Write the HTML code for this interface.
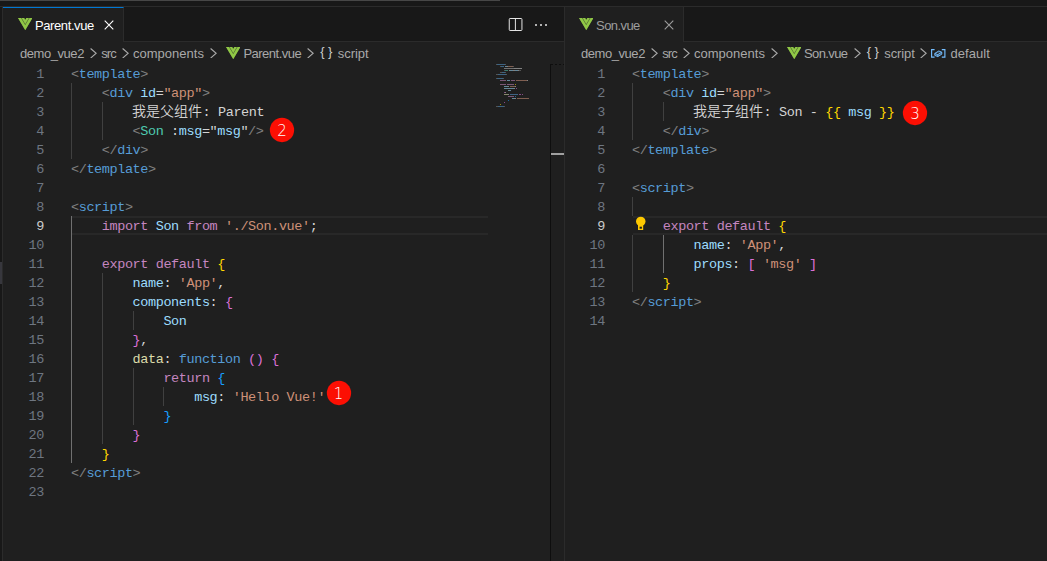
<!DOCTYPE html><html lang="zh"><head><meta charset="utf-8"><title>Parent.vue</title><style>
*{box-sizing:border-box}
html,body{margin:0;padding:0}
body{width:1047px;height:561px;overflow:hidden;background:#1f1f1f;position:relative;font-family:"Liberation Sans","Noto Sans CJK SC",sans-serif;font-size:13px;color:#ccc}
div,span,svg{position:absolute}
.cl{height:19px;line-height:19px;white-space:pre;font-family:"Liberation Mono","Noto Sans CJK SC",monospace;font-size:13.5px;letter-spacing:-0.401px}
.cl span{top:1px;height:19px;line-height:19px}
.cl .cjk{font-family:"Noto Sans CJK SC","Liberation Mono",sans-serif;font-size:14px;letter-spacing:0;color:#d4d4d4;top:-1px;font-weight:350}
.ln{width:41.5px;text-align:right;height:19px;line-height:21px;color:#6e7681;font-family:"Liberation Mono",monospace;font-size:13.5px;letter-spacing:-0.401px}
.ln.act{color:#ccc}
.ig{width:1px;background:#404040}
.iga{background:#707070}
.hl{height:19px;border-top:2px solid #282828;border-bottom:2px solid #282828}
.ui{white-space:pre;height:22px;line-height:22px;font-size:13px;color:#a9a9a9}
</style></head><body>
<div style="left:0;top:0;width:1047px;height:7px;background:#181818"></div>
<div style="left:0;top:0;width:500px;height:1px;background:#474747"></div>
<div style="left:0;top:6px;width:1047px;height:1px;background:#2b2b2b"></div>
<div style="left:0;top:7px;width:2px;height:554px;background:#181818"></div>
<div style="left:0;top:262px;width:2px;height:22px;background:#37373d"></div>
<div style="left:2px;top:7px;width:1px;height:554px;background:#2b2b2b"></div>
<div style="left:3px;top:7px;width:561px;height:35px;background:#181818;border-bottom:1px solid #2b2b2b"></div>
<div style="left:3px;top:7px;width:121px;height:35px;background:#1f1f1f;border-top:1px solid #0078d4;border-right:1px solid #2b2b2b"></div>
<div style="left:565px;top:7px;width:482px;height:35px;background:#181818;border-bottom:1px solid #2b2b2b"></div>
<div style="left:565px;top:7px;width:119px;height:35px;background:#1f1f1f;border-right:1px solid #2b2b2b"></div>
<div style="left:564px;top:7px;width:1px;height:554px;background:#2b2b2b"></div>
<svg class="vue" style="left:17.7px;top:17.8px" viewBox="0 0 14.5 12.2" width="14.5" height="12.2"><polygon points="0,0 6.3,0 7.25,1.6 8.2,0 14.5,0 7.25,12.2" fill="#8dc149" opacity="0.5"/><polygon points="0,0 2.9,0 7.25,7.3 11.6,0 14.5,0 7.25,12.2" fill="#90c846"/><polygon points="3.7,0 6.1,0 7.25,2 8.4,0 10.8,0 7.25,6" fill="#90c846"/></svg>
<div class="ui" style="left:34.9px;top:15px;color:#fff;letter-spacing:-0.386px">Parent.vue</div>
<svg class="vue" style="left:578.7px;top:17.8px" viewBox="0 0 14.5 12.2" width="14.5" height="12.2"><polygon points="0,0 6.3,0 7.25,1.6 8.2,0 14.5,0 7.25,12.2" fill="#8dc149" opacity="0.5"/><polygon points="0,0 2.9,0 7.25,7.3 11.6,0 14.5,0 7.25,12.2" fill="#90c846"/><polygon points="3.7,0 6.1,0 7.25,2 8.4,0 10.8,0 7.25,6" fill="#90c846"/></svg>
<div class="ui" style="left:596.1px;top:15px;color:#9d9d9d;letter-spacing:-0.584px">Son.vue</div>
<svg style="left:104px;top:20px" width="10" height="10" viewBox="0 0 10 10"><path d="M0.7 0.7 L9.3 9.3 M9.3 0.7 L0.7 9.3" stroke="#fff" stroke-width="1.1" fill="none"/></svg>
<svg style="left:664px;top:20px" width="10" height="10" viewBox="0 0 10 10"><path d="M0.7 0.7 L9.3 9.3 M9.3 0.7 L0.7 9.3" stroke="#9d9d9d" stroke-width="1.1" fill="none"/></svg>
<svg style="left:508px;top:17px" width="16" height="16" viewBox="0 0 16 16"><rect x="1.25" y="1.5" width="12.7" height="12" rx="0.8" stroke="#e4e4e4" stroke-width="1" fill="none"/><path d="M7.4 1.5 V13.5" stroke="#e4e4e4" stroke-width="1" fill="none"/></svg>
<svg style="left:534px;top:23px" width="14" height="4" viewBox="0 0 14 4"><circle cx="2" cy="2" r="1" fill="#e4e4e4"/><circle cx="7" cy="2" r="1" fill="#e4e4e4"/><circle cx="12" cy="2" r="1" fill="#e4e4e4"/></svg>
<div class="ui" style="left:19.9px;top:43px;letter-spacing:-0.432px">demo_vue2</div>
<div class="ui" style="left:101.3px;top:43px;letter-spacing:-0.970px">src</div>
<div class="ui" style="left:133px;top:43px;letter-spacing:0.019px">components</div>
<div class="ui" style="left:243.4px;top:43px;letter-spacing:-0.508px">Parent.vue</div>
<div class="ui" style="left:337.7px;top:43px;letter-spacing:-0.012px">script</div>
<div class="ui" style="left:580.9px;top:43px;letter-spacing:-0.432px">demo_vue2</div>
<div class="ui" style="left:662.3px;top:43px;letter-spacing:-0.970px">src</div>
<div class="ui" style="left:694px;top:43px;letter-spacing:0.019px">components</div>
<div class="ui" style="left:804px;top:43px;letter-spacing:-0.617px">Son.vue</div>
<div class="ui" style="left:884.3px;top:43px;letter-spacing:-0.112px">script</div>
<div class="ui" style="left:950.6px;top:43px;letter-spacing:0.025px">default</div>
<svg style="left:90px;top:47.6px" width="7" height="10.6" viewBox="0 0 7 10.6"><path d="M0.6 0.5 L6.2 5.3 L0.6 10.1" stroke="#a9a9a9" stroke-width="1.15" fill="none"/></svg>
<svg style="left:122px;top:47.6px" width="7" height="10.6" viewBox="0 0 7 10.6"><path d="M0.6 0.5 L6.2 5.3 L0.6 10.1" stroke="#a9a9a9" stroke-width="1.15" fill="none"/></svg>
<svg style="left:209.8px;top:47.6px" width="7" height="10.6" viewBox="0 0 7 10.6"><path d="M0.6 0.5 L6.2 5.3 L0.6 10.1" stroke="#a9a9a9" stroke-width="1.15" fill="none"/></svg>
<svg style="left:307.4px;top:47.6px" width="7" height="10.6" viewBox="0 0 7 10.6"><path d="M0.6 0.5 L6.2 5.3 L0.6 10.1" stroke="#a9a9a9" stroke-width="1.15" fill="none"/></svg>
<svg style="left:651px;top:47.6px" width="7" height="10.6" viewBox="0 0 7 10.6"><path d="M0.6 0.5 L6.2 5.3 L0.6 10.1" stroke="#a9a9a9" stroke-width="1.15" fill="none"/></svg>
<svg style="left:683px;top:47.6px" width="7" height="10.6" viewBox="0 0 7 10.6"><path d="M0.6 0.5 L6.2 5.3 L0.6 10.1" stroke="#a9a9a9" stroke-width="1.15" fill="none"/></svg>
<svg style="left:770.8px;top:47.6px" width="7" height="10.6" viewBox="0 0 7 10.6"><path d="M0.6 0.5 L6.2 5.3 L0.6 10.1" stroke="#a9a9a9" stroke-width="1.15" fill="none"/></svg>
<svg style="left:854.3px;top:47.6px" width="7" height="10.6" viewBox="0 0 7 10.6"><path d="M0.6 0.5 L6.2 5.3 L0.6 10.1" stroke="#a9a9a9" stroke-width="1.15" fill="none"/></svg>
<svg style="left:920.3px;top:47.6px" width="7" height="10.6" viewBox="0 0 7 10.6"><path d="M0.6 0.5 L6.2 5.3 L0.6 10.1" stroke="#a9a9a9" stroke-width="1.15" fill="none"/></svg>
<svg class="vue" style="left:225.7px;top:46.8px" viewBox="0 0 14.5 12.2" width="14.5" height="12.2"><polygon points="0,0 6.3,0 7.25,1.6 8.2,0 14.5,0 7.25,12.2" fill="#8dc149" opacity="0.5"/><polygon points="0,0 2.9,0 7.25,7.3 11.6,0 14.5,0 7.25,12.2" fill="#90c846"/><polygon points="3.7,0 6.1,0 7.25,2 8.4,0 10.8,0 7.25,6" fill="#90c846"/></svg>
<svg class="vue" style="left:786.7px;top:46.8px" viewBox="0 0 14.5 12.2" width="14.5" height="12.2"><polygon points="0,0 6.3,0 7.25,1.6 8.2,0 14.5,0 7.25,12.2" fill="#8dc149" opacity="0.5"/><polygon points="0,0 2.9,0 7.25,7.3 11.6,0 14.5,0 7.25,12.2" fill="#90c846"/><polygon points="3.7,0 6.1,0 7.25,2 8.4,0 10.8,0 7.25,6" fill="#90c846"/></svg>
<div class="ui" style="left:320.3px;top:41px;color:#ccc;font-size:13px;letter-spacing:3.4px">{}</div>
<div class="ui" style="left:866.7px;top:41px;color:#ccc;font-size:13px;letter-spacing:3.4px">{}</div>
<svg style="left:930.4px;top:48.4px" width="16.4" height="10.2" viewBox="0 0 16.4 10.2"><path d="M4.6 1.6 H1.6 V9.2 H4.6 M11.8 1.6 H14.9 V9.2 H11.8" stroke="#75beff" stroke-width="1.15" fill="none"/><path d="M4.8 5.4 L8.8 3 L11.8 4.2 V6.2 L7.8 8.6 L4.8 7.4 Z M4.8 5.4 L7.8 6.6 L11.8 4.2 M7.8 6.6 V8.6" stroke="#75beff" stroke-width="0.95" fill="#75beff" fill-opacity="0.35" stroke-linejoin="round"/></svg>
<div class="hl" style="left:72px;top:216px;width:416px"></div>
<div class="hl" style="left:633px;top:216px;width:414px"></div>
<div class="ig" style="left:71px;top:83px;height:76px"></div>
<div class="ig" style="left:102px;top:102px;height:38px"></div>
<div class="ig iga" style="left:71px;top:216px;height:247px"></div>
<div class="ig" style="left:102px;top:273px;height:171px"></div>
<div class="ig" style="left:133px;top:311px;height:19px"></div>
<div class="ig" style="left:133px;top:368px;height:57px"></div>
<div class="ig" style="left:163px;top:387px;height:19px"></div>
<div class="ig" style="left:632px;top:83px;height:57px"></div>
<div class="ig" style="left:663px;top:102px;height:19px"></div>
<div class="ig" style="left:632px;top:197px;height:19px"></div>
<div class="ig" style="left:632px;top:235px;height:57px"></div>
<div class="ig iga" style="left:663px;top:235px;height:38px"></div>
<div class="ln" style="top:64px;left:2.4px">1</div>
<div class="cl" style="top:64px;left:71.0px"><span style="left:0.00px;color:#808080">&lt;</span><span style="left:7.70px;color:#569cd6">template</span><span style="left:69.30px;color:#808080">&gt;</span></div>
<div class="ln" style="top:83px;left:2.4px">2</div>
<div class="cl" style="top:83px;left:71.0px"><span style="left:30.80px;color:#808080">&lt;</span><span style="left:38.50px;color:#569cd6">div</span><span style="left:69.30px;color:#9cdcfe">id</span><span style="left:84.70px;color:#d4d4d4">=</span><span style="left:92.40px;color:#ce9178">"app"</span><span style="left:130.90px;color:#808080">&gt;</span></div>
<div class="ln" style="top:102px;left:2.4px">3</div>
<div class="cl" style="top:102px;left:71.0px"><span class="cjk" style="left:61.00px">我是父组件</span><span style="left:131.60px;color:#d4d4d4">: Parent</span></div>
<div class="ln" style="top:121px;left:2.4px">4</div>
<div class="cl" style="top:121px;left:71.0px"><span style="left:61.60px;color:#808080">&lt;</span><span style="left:69.30px;color:#4ec9b0">Son</span><span style="left:100.10px;color:#d4d4d4">:</span><span style="left:107.80px;color:#9cdcfe">msg</span><span style="left:130.90px;color:#d4d4d4">=</span><span style="left:138.60px;color:#d4d4d4">"</span><span style="left:146.30px;color:#9cdcfe">msg</span><span style="left:169.40px;color:#d4d4d4">"</span><span style="left:177.10px;color:#808080">/&gt;</span></div>
<div class="ln" style="top:140px;left:2.4px">5</div>
<div class="cl" style="top:140px;left:71.0px"><span style="left:30.80px;color:#808080">&lt;/</span><span style="left:46.20px;color:#569cd6">div</span><span style="left:69.30px;color:#808080">&gt;</span></div>
<div class="ln" style="top:159px;left:2.4px">6</div>
<div class="cl" style="top:159px;left:71.0px"><span style="left:0.00px;color:#808080">&lt;/</span><span style="left:15.40px;color:#569cd6">template</span><span style="left:77.00px;color:#808080">&gt;</span></div>
<div class="ln" style="top:178px;left:2.4px">7</div>
<div class="ln" style="top:197px;left:2.4px">8</div>
<div class="cl" style="top:197px;left:71.0px"><span style="left:0.00px;color:#808080">&lt;</span><span style="left:7.70px;color:#569cd6">script</span><span style="left:53.90px;color:#808080">&gt;</span></div>
<div class="ln act" style="top:216px;left:2.4px">9</div>
<div class="cl" style="top:216px;left:71.0px"><span style="left:30.80px;color:#c586c0">import</span><span style="left:84.70px;color:#9cdcfe">Son</span><span style="left:115.50px;color:#c586c0">from</span><span style="left:154.00px;color:#ce9178">'./Son.vue'</span><span style="left:238.70px;color:#d4d4d4">;</span></div>
<div class="ln" style="top:235px;left:2.4px">10</div>
<div class="ln" style="top:254px;left:2.4px">11</div>
<div class="cl" style="top:254px;left:71.0px"><span style="left:30.80px;color:#c586c0">export</span><span style="left:84.70px;color:#c586c0">default</span><span style="left:146.30px;color:#ffd700">{</span></div>
<div class="ln" style="top:273px;left:2.4px">12</div>
<div class="cl" style="top:273px;left:71.0px"><span style="left:61.60px;color:#9cdcfe">name</span><span style="left:92.40px;color:#d4d4d4">:</span><span style="left:107.80px;color:#ce9178">'App'</span><span style="left:146.30px;color:#d4d4d4">,</span></div>
<div class="ln" style="top:292px;left:2.4px">13</div>
<div class="cl" style="top:292px;left:71.0px"><span style="left:61.60px;color:#9cdcfe">components</span><span style="left:138.60px;color:#d4d4d4">:</span><span style="left:154.00px;color:#da70d6">{</span></div>
<div class="ln" style="top:311px;left:2.4px">14</div>
<div class="cl" style="top:311px;left:71.0px"><span style="left:92.40px;color:#9cdcfe">Son</span></div>
<div class="ln" style="top:330px;left:2.4px">15</div>
<div class="cl" style="top:330px;left:71.0px"><span style="left:61.60px;color:#da70d6">}</span><span style="left:69.30px;color:#d4d4d4">,</span></div>
<div class="ln" style="top:349px;left:2.4px">16</div>
<div class="cl" style="top:349px;left:71.0px"><span style="left:61.60px;color:#dcdcaa">data</span><span style="left:92.40px;color:#d4d4d4">:</span><span style="left:107.80px;color:#569cd6">function</span><span style="left:177.10px;color:#da70d6">()</span><span style="left:200.20px;color:#da70d6">{</span></div>
<div class="ln" style="top:368px;left:2.4px">17</div>
<div class="cl" style="top:368px;left:71.0px"><span style="left:92.40px;color:#c586c0">return</span><span style="left:146.30px;color:#179fff">{</span></div>
<div class="ln" style="top:387px;left:2.4px">18</div>
<div class="cl" style="top:387px;left:71.0px"><span style="left:123.20px;color:#9cdcfe">msg</span><span style="left:146.30px;color:#d4d4d4">:</span><span style="left:161.70px;color:#ce9178">'Hello Vue!'</span></div>
<div class="ln" style="top:406px;left:2.4px">19</div>
<div class="cl" style="top:406px;left:71.0px"><span style="left:92.40px;color:#179fff">}</span></div>
<div class="ln" style="top:425px;left:2.4px">20</div>
<div class="cl" style="top:425px;left:71.0px"><span style="left:61.60px;color:#da70d6">}</span></div>
<div class="ln" style="top:444px;left:2.4px">21</div>
<div class="cl" style="top:444px;left:71.0px"><span style="left:30.80px;color:#ffd700">}</span></div>
<div class="ln" style="top:463px;left:2.4px">22</div>
<div class="cl" style="top:463px;left:71.0px"><span style="left:0.00px;color:#808080">&lt;/</span><span style="left:15.40px;color:#569cd6">script</span><span style="left:61.60px;color:#808080">&gt;</span></div>
<div class="ln" style="top:482px;left:2.4px">23</div>
<div class="ln" style="top:64px;left:563.4px">1</div>
<div class="cl" style="top:64px;left:632.0px"><span style="left:0.00px;color:#808080">&lt;</span><span style="left:7.70px;color:#569cd6">template</span><span style="left:69.30px;color:#808080">&gt;</span></div>
<div class="ln" style="top:83px;left:563.4px">2</div>
<div class="cl" style="top:83px;left:632.0px"><span style="left:30.80px;color:#808080">&lt;</span><span style="left:38.50px;color:#569cd6">div</span><span style="left:69.30px;color:#9cdcfe">id</span><span style="left:84.70px;color:#d4d4d4">=</span><span style="left:92.40px;color:#ce9178">"app"</span><span style="left:130.90px;color:#808080">&gt;</span></div>
<div class="ln" style="top:102px;left:563.4px">3</div>
<div class="cl" style="top:102px;left:632.0px"><span class="cjk" style="left:61.00px">我是子组件</span><span style="left:131.60px;color:#d4d4d4">: Son - </span><span style="left:193.20px;color:#ffd700">{{</span><span style="left:216.30px;color:#9cdcfe">msg</span><span style="left:247.10px;color:#ffd700">}}</span></div>
<div class="ln" style="top:121px;left:563.4px">4</div>
<div class="cl" style="top:121px;left:632.0px"><span style="left:30.80px;color:#808080">&lt;/</span><span style="left:46.20px;color:#569cd6">div</span><span style="left:69.30px;color:#808080">&gt;</span></div>
<div class="ln" style="top:140px;left:563.4px">5</div>
<div class="cl" style="top:140px;left:632.0px"><span style="left:0.00px;color:#808080">&lt;/</span><span style="left:15.40px;color:#569cd6">template</span><span style="left:77.00px;color:#808080">&gt;</span></div>
<div class="ln" style="top:159px;left:563.4px">6</div>
<div class="ln" style="top:178px;left:563.4px">7</div>
<div class="cl" style="top:178px;left:632.0px"><span style="left:0.00px;color:#808080">&lt;</span><span style="left:7.70px;color:#569cd6">script</span><span style="left:53.90px;color:#808080">&gt;</span></div>
<div class="ln" style="top:197px;left:563.4px">8</div>
<div class="ln act" style="top:216px;left:563.4px">9</div>
<div class="cl" style="top:216px;left:632.0px"><span style="left:30.80px;color:#c586c0">export</span><span style="left:84.70px;color:#c586c0">default</span><span style="left:146.30px;color:#ffd700">{</span></div>
<div class="ln" style="top:235px;left:563.4px">10</div>
<div class="cl" style="top:235px;left:632.0px"><span style="left:61.60px;color:#9cdcfe">name</span><span style="left:92.40px;color:#d4d4d4">:</span><span style="left:107.80px;color:#ce9178">'App'</span><span style="left:146.30px;color:#d4d4d4">,</span></div>
<div class="ln" style="top:254px;left:563.4px">11</div>
<div class="cl" style="top:254px;left:632.0px"><span style="left:61.60px;color:#9cdcfe">props</span><span style="left:100.10px;color:#d4d4d4">:</span><span style="left:115.50px;color:#da70d6">[</span><span style="left:130.90px;color:#ce9178">'msg'</span><span style="left:177.10px;color:#da70d6">]</span></div>
<div class="ln" style="top:273px;left:563.4px">12</div>
<div class="cl" style="top:273px;left:632.0px"><span style="left:30.80px;color:#ffd700">}</span></div>
<div class="ln" style="top:292px;left:563.4px">13</div>
<div class="cl" style="top:292px;left:632.0px"><span style="left:0.00px;color:#808080">&lt;/</span><span style="left:15.40px;color:#569cd6">script</span><span style="left:61.60px;color:#808080">&gt;</span></div>
<div class="ln" style="top:311px;left:563.4px">14</div>
<div style="left:496px;top:64px;width:1px;height:1.4px;background:#808080;opacity:.55"></div>
<div style="left:497px;top:64px;width:8px;height:1.4px;background:#569cd6;opacity:.55"></div>
<div style="left:505px;top:64px;width:1px;height:1.4px;background:#808080;opacity:.55"></div>
<div style="left:500px;top:66px;width:1px;height:1.4px;background:#808080;opacity:.55"></div>
<div style="left:501px;top:66px;width:3px;height:1.4px;background:#569cd6;opacity:.55"></div>
<div style="left:505px;top:66px;width:2px;height:1.4px;background:#9cdcfe;opacity:.55"></div>
<div style="left:507px;top:66px;width:1px;height:1.4px;background:#d4d4d4;opacity:.55"></div>
<div style="left:508px;top:66px;width:5px;height:1.4px;background:#ce9178;opacity:.55"></div>
<div style="left:513px;top:66px;width:1px;height:1.4px;background:#808080;opacity:.55"></div>
<div style="left:504px;top:68px;width:10px;height:1.4px;background:#d4d4d4;opacity:.45"></div>
<div style="left:514px;top:68px;width:8px;height:1.4px;background:#d4d4d4;opacity:.55"></div>
<div style="left:504px;top:70px;width:1px;height:1.4px;background:#808080;opacity:.55"></div>
<div style="left:505px;top:70px;width:3px;height:1.4px;background:#4ec9b0;opacity:.55"></div>
<div style="left:509px;top:70px;width:1px;height:1.4px;background:#d4d4d4;opacity:.55"></div>
<div style="left:510px;top:70px;width:3px;height:1.4px;background:#9cdcfe;opacity:.55"></div>
<div style="left:513px;top:70px;width:1px;height:1.4px;background:#d4d4d4;opacity:.55"></div>
<div style="left:514px;top:70px;width:1px;height:1.4px;background:#d4d4d4;opacity:.55"></div>
<div style="left:515px;top:70px;width:3px;height:1.4px;background:#9cdcfe;opacity:.55"></div>
<div style="left:518px;top:70px;width:1px;height:1.4px;background:#d4d4d4;opacity:.55"></div>
<div style="left:519px;top:70px;width:2px;height:1.4px;background:#808080;opacity:.55"></div>
<div style="left:500px;top:72px;width:2px;height:1.4px;background:#808080;opacity:.55"></div>
<div style="left:502px;top:72px;width:3px;height:1.4px;background:#569cd6;opacity:.55"></div>
<div style="left:505px;top:72px;width:1px;height:1.4px;background:#808080;opacity:.55"></div>
<div style="left:496px;top:74px;width:2px;height:1.4px;background:#808080;opacity:.55"></div>
<div style="left:498px;top:74px;width:8px;height:1.4px;background:#569cd6;opacity:.55"></div>
<div style="left:506px;top:74px;width:1px;height:1.4px;background:#808080;opacity:.55"></div>
<div style="left:496px;top:78px;width:1px;height:1.4px;background:#808080;opacity:.55"></div>
<div style="left:497px;top:78px;width:6px;height:1.4px;background:#569cd6;opacity:.55"></div>
<div style="left:503px;top:78px;width:1px;height:1.4px;background:#808080;opacity:.55"></div>
<div style="left:500px;top:80px;width:6px;height:1.4px;background:#c586c0;opacity:.55"></div>
<div style="left:507px;top:80px;width:3px;height:1.4px;background:#9cdcfe;opacity:.55"></div>
<div style="left:511px;top:80px;width:4px;height:1.4px;background:#c586c0;opacity:.55"></div>
<div style="left:516px;top:80px;width:11px;height:1.4px;background:#ce9178;opacity:.55"></div>
<div style="left:527px;top:80px;width:1px;height:1.4px;background:#d4d4d4;opacity:.55"></div>
<div style="left:500px;top:84px;width:6px;height:1.4px;background:#c586c0;opacity:.55"></div>
<div style="left:507px;top:84px;width:7px;height:1.4px;background:#c586c0;opacity:.55"></div>
<div style="left:515px;top:84px;width:1px;height:1.4px;background:#ffd700;opacity:.55"></div>
<div style="left:504px;top:86px;width:4px;height:1.4px;background:#9cdcfe;opacity:.55"></div>
<div style="left:508px;top:86px;width:1px;height:1.4px;background:#d4d4d4;opacity:.55"></div>
<div style="left:510px;top:86px;width:5px;height:1.4px;background:#ce9178;opacity:.55"></div>
<div style="left:515px;top:86px;width:1px;height:1.4px;background:#d4d4d4;opacity:.55"></div>
<div style="left:504px;top:88px;width:10px;height:1.4px;background:#9cdcfe;opacity:.55"></div>
<div style="left:514px;top:88px;width:1px;height:1.4px;background:#d4d4d4;opacity:.55"></div>
<div style="left:516px;top:88px;width:1px;height:1.4px;background:#da70d6;opacity:.55"></div>
<div style="left:508px;top:90px;width:3px;height:1.4px;background:#9cdcfe;opacity:.55"></div>
<div style="left:504px;top:92px;width:1px;height:1.4px;background:#da70d6;opacity:.55"></div>
<div style="left:505px;top:92px;width:1px;height:1.4px;background:#d4d4d4;opacity:.55"></div>
<div style="left:504px;top:94px;width:4px;height:1.4px;background:#dcdcaa;opacity:.55"></div>
<div style="left:508px;top:94px;width:1px;height:1.4px;background:#d4d4d4;opacity:.55"></div>
<div style="left:510px;top:94px;width:8px;height:1.4px;background:#569cd6;opacity:.55"></div>
<div style="left:519px;top:94px;width:2px;height:1.4px;background:#da70d6;opacity:.55"></div>
<div style="left:522px;top:94px;width:1px;height:1.4px;background:#da70d6;opacity:.55"></div>
<div style="left:508px;top:96px;width:6px;height:1.4px;background:#c586c0;opacity:.55"></div>
<div style="left:515px;top:96px;width:1px;height:1.4px;background:#179fff;opacity:.55"></div>
<div style="left:512px;top:98px;width:3px;height:1.4px;background:#9cdcfe;opacity:.55"></div>
<div style="left:515px;top:98px;width:1px;height:1.4px;background:#d4d4d4;opacity:.55"></div>
<div style="left:517px;top:98px;width:12px;height:1.4px;background:#ce9178;opacity:.55"></div>
<div style="left:508px;top:100px;width:1px;height:1.4px;background:#179fff;opacity:.55"></div>
<div style="left:504px;top:102px;width:1px;height:1.4px;background:#da70d6;opacity:.55"></div>
<div style="left:500px;top:104px;width:1px;height:1.4px;background:#ffd700;opacity:.55"></div>
<div style="left:496px;top:106px;width:2px;height:1.4px;background:#808080;opacity:.55"></div>
<div style="left:498px;top:106px;width:6px;height:1.4px;background:#569cd6;opacity:.55"></div>
<div style="left:504px;top:106px;width:1px;height:1.4px;background:#808080;opacity:.55"></div>
<div style="left:550px;top:64px;width:1px;height:497px;background:#0e0e0e"></div>
<div style="left:551px;top:64px;width:13px;height:1px;background:repeating-linear-gradient(90deg,#0e0e0e 0 2px,transparent 2px 4px)"></div>
<div style="left:551px;top:153px;width:13px;height:2px;background:#a0a0a0"></div>
<svg style="left:268.0px;top:116.0px" width="28" height="28" viewBox="0 0 28 28"><circle cx="14" cy="14" r="12.15" fill="#fc0f03"/><text x="13.9" y="20.2" text-anchor="middle" font-family="DejaVu Sans, Liberation Sans, sans-serif" font-weight="200" font-size="15" fill="#fff">2</text></svg>
<svg style="left:325.0px;top:379.0px" width="28" height="28" viewBox="0 0 28 28"><circle cx="14" cy="14" r="12.15" fill="#fc0f03"/><text x="13.4" y="20.2" text-anchor="middle" font-family="DejaVu Sans, Liberation Sans, sans-serif" font-weight="200" font-size="15" fill="#fff">1</text></svg>
<svg style="left:901.1px;top:98.9px" width="28" height="28" viewBox="0 0 28 28"><circle cx="14" cy="14" r="12.15" fill="#fc0f03"/><text x="13.9" y="20.2" text-anchor="middle" font-family="DejaVu Sans, Liberation Sans, sans-serif" font-weight="200" font-size="15" fill="#fff">3</text></svg>
<svg style="left:635px;top:216px" width="12" height="15" viewBox="0 0 12 15"><circle cx="5.75" cy="5.4" r="4.75" fill="#fdc800"/><path d="M3 8 H8.2 V14 H3 Z" fill="#fdc800"/><rect x="4.6" y="10.7" width="2.3" height="2" fill="#1f1f1f"/></svg>
</body></html>
